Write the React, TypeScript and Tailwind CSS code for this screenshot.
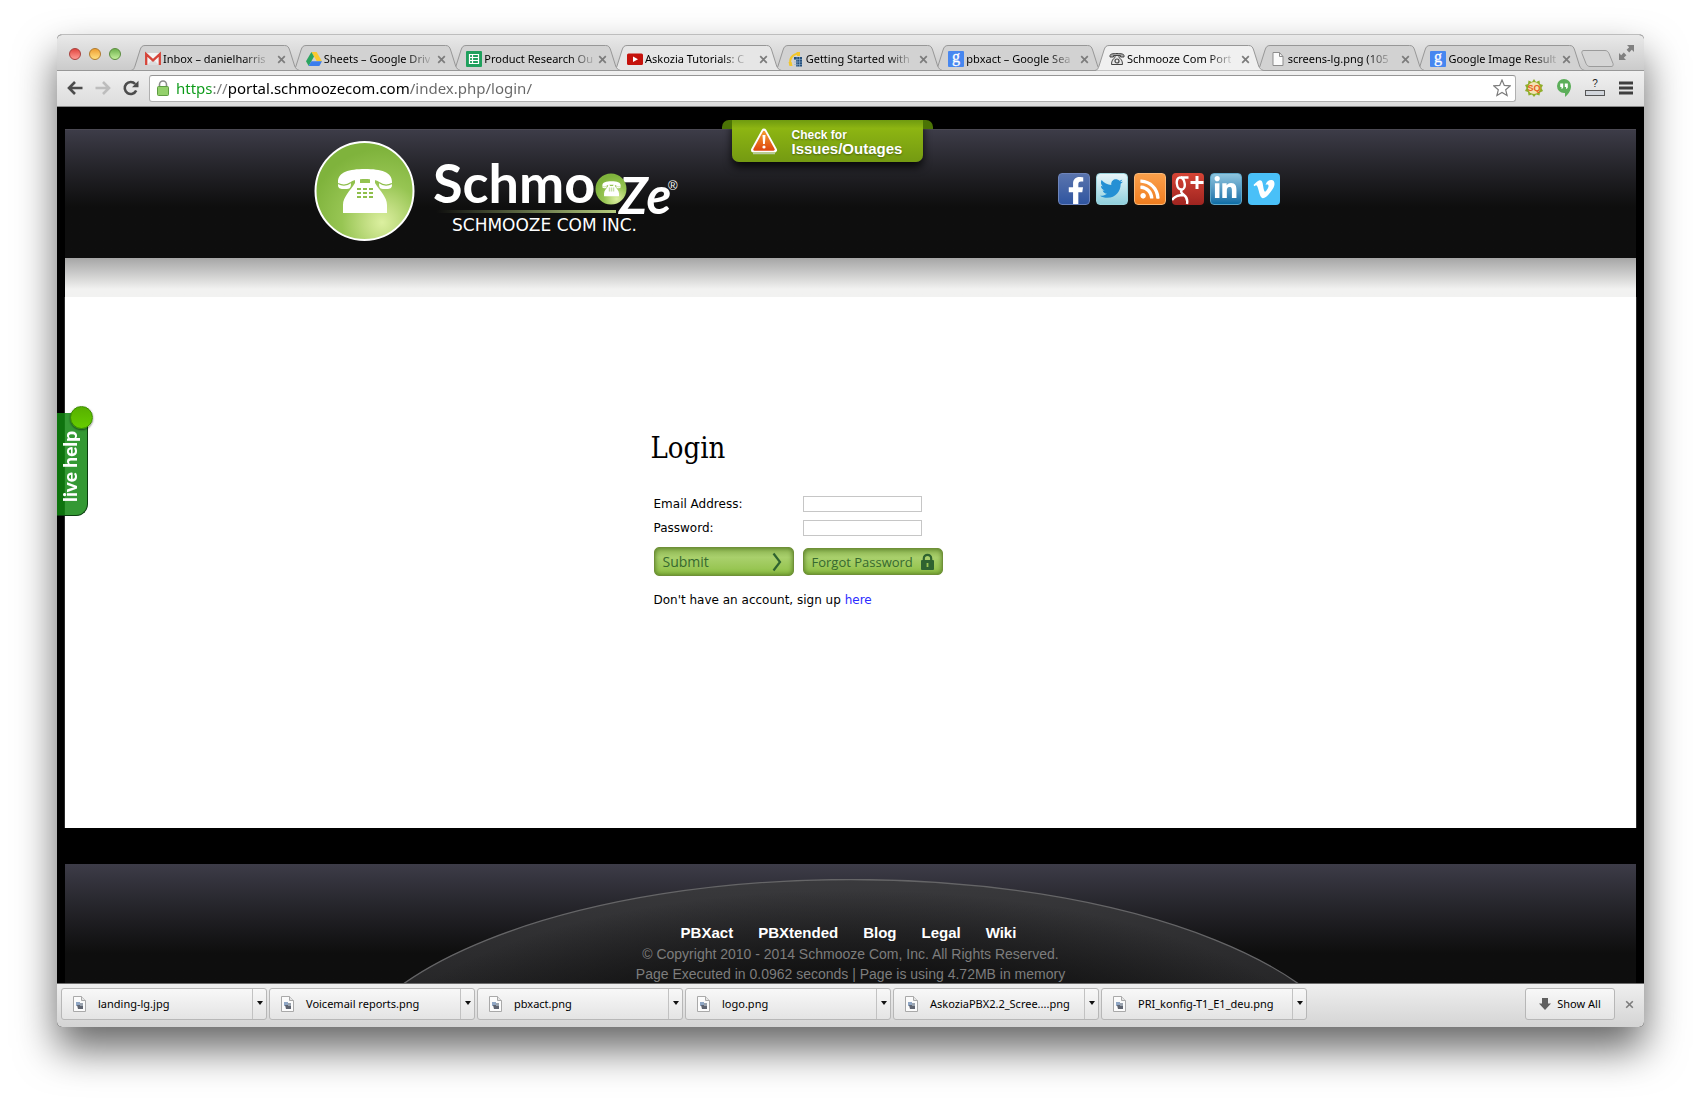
import { ReactNode, useState } from 'react'
import { FaFacebookF, FaLinkedinIn, FaRss, FaTwitter, FaVimeoV } from 'react-icons/fa'

interface Tab {
  title: string
  icon: ReactNode
  fill?: string
}

function GmailIcon() {
  return (
    <svg width="16" height="16" viewBox="0 0 16 16">
      <rect x="1" y="2" width="14" height="12" fill="#f3f3f3" />
      <path d="M2 14 8 8l6 6z" fill="#dcdcdc" />
      <path d="M1.2 14V3.2L8 9.4l6.800-6.200V14" fill="none" stroke="#d6453a" strokeWidth="2.300" />
    </svg>
  )
}

function DriveIcon() {
  return (
    <svg width="16" height="16" viewBox="0 0 16 16">
      <path d="M5.400 1h5.200L16 10.300h-5.200z" fill="#fbc92f" />
      <path d="M5.400 1 8 5.500 2.700 15 0 10.300z" fill="#2ba45f" />
      <path d="M5.300 10.300H16L13.400 15H2.700z" fill="#3b7ded" />
    </svg>
  )
}

function SheetsIcon() {
  return (
    <svg width="16" height="16" viewBox="0 0 16 16">
      <rect width="16" height="16" rx="1" fill="#1fa05d" />
      <path d="M3.500 3.500h9v9h-9zM3.500 6.500h9M3.500 9.500h9M6.500 3.500v9" fill="none" stroke="#fff" strokeWidth="1.200" />
    </svg>
  )
}

function YoutubeIcon() {
  return (
    <svg width="16" height="16" viewBox="0 0 16 16">
      <rect y="2.500" width="16" height="11.500" rx="1.500" fill="#c5120c" />
      <path d="M6 5.500v5.500l5-2.700z" fill="#fff" />
    </svg>
  )
}

function AskoziaIcon() {
  return (
    <svg width="16" height="16" viewBox="0 0 16 16">
      <path d="M2.500 14C1 8 4 3 11 2.500" fill="none" stroke="#f2c62c" strokeWidth="2" />
      <path d="M8.500 1h3.500v4H9zM.5 11h3l1 4h-3z" fill="#f2c62c" />
      <path d="M6 6h8v9.500H8V9H6z" fill="#244f7c" />
      <path d="M6 8.500h8M6 11h8M6 13.500h8M9 6v10M11.500 6v10" stroke="#8eb0cf" strokeWidth=".6" />
    </svg>
  )
}

function GoogleIcon() {
  return (
    <svg width="16" height="16" viewBox="0 0 16 16" className="overflow-visible">
      <rect width="16" height="16" rx="1" fill="#4787f0" />
      <text x="8" y="11" textAnchor="middle" fontSize="16" fill="#fff" stroke="#fff" strokeWidth=".3" fontFamily="Liberation Serif, serif">
        g
      </text>
    </svg>
  )
}

function FileIcon() {
  return (
    <svg width="16" height="16" viewBox="0 0 16 16">
      <path d="M3 1.500h6.500l3.500 4v9H3z" fill="#fafafa" stroke="#8d8d8d" />
      <path d="M9.500 1.500v4H13" fill="none" stroke="#8d8d8d" />
    </svg>
  )
}

function PhoneShape({ fill, holes }: { fill: string; holes: string }) {
  return (
    <>
      <path
        d="M1 14C1 4 12 1 28 1s27 3 27 13v3c0 3-2 4-5 4h-4c-4 0-4-3-4-7-3-4-25-4-28 0 0 4 0 7-4 7H6c-3 0-5-1-5-4z"
        fill={fill}
      />
      <path d="M18 11h5v4h10v-4h5v4c5 8 12 14 12 22v8H6v-8c0-8 7-14 12-22z" fill={fill} />
      <path d="M1 15.500c4 2 9 2 13-1M42 14.500c4 3 9 3 13 1" fill="none" stroke={holes} strokeWidth="1.200" />
      <path
        d="M20 20h4v2h-4zM26 20h4v2h-4zM32 20h4v2h-4zM20 24h4v2h-4zM26 24h4v2h-4zM32 24h4v2h-4zM20 28h4v2h-4zM26 28h4v2h-4zM32 28h4v2h-4z"
        fill={holes}
      />
    </>
  )
}

function PhoneIcon() {
  return (
    <svg width="16" height="16" viewBox="0 0 16 16">
      <path d="M1 6V4.500C1 3 4 2.500 8 2.500s7 .5 7 2V6h-3.500V4.500h-7V6z" fill="#aaa" stroke="#444" />
      <path d="M6 5v1.500C4 8 2.500 9.500 2.500 13.500h11C13.500 9.500 12 8 10 6.500V5" fill="#e8e8e8" stroke="#444" />
      <circle cx="8" cy="10" r="2" fill="none" stroke="#444" strokeWidth="1.200" />
    </svg>
  )
}

const tabs: Tab[] = [
  { title: 'Inbox – danielharris', icon: <GmailIcon /> },
  { title: 'Sheets – Google Driv', icon: <DriveIcon /> },
  { title: 'Product Research Ou', icon: <SheetsIcon /> },
  { title: 'Askozia Tutorials: C', icon: <YoutubeIcon />, fill: '#e6e6e6' },
  { title: 'Getting Started with', icon: <AskoziaIcon /> },
  { title: 'pbxact – Google Sea', icon: <GoogleIcon /> },
  { title: 'Schmooze Com Port', icon: <PhoneIcon />, fill: '#f0f0f0' },
  { title: 'screens-lg.png (105', icon: <FileIcon /> },
  { title: 'Google Image Result', icon: <GoogleIcon /> },
]

const downloads = [
  'landing-lg.jpg',
  'Voicemail reports.png',
  'pbxact.png',
  'logo.png',
  'AskoziaPBX2.2_Scree....png',
  'PRI_konfig-T1_E1_deu.png',
]

const footerLinks = ['PBXact', 'PBXtended', 'Blog', 'Legal', 'Wiki']

function TabStrip() {
  const [active, setActive] = useState(6)

  return (
    <div className="flex h-9 items-end border-b border-[#989898] bg-gradient-to-b from-[#e9e9e9] to-[#cbcbcb]">
      <div className="flex gap-2 self-start pl-3 pt-[13px]">
        <button aria-label="Close" className="size-3 rounded-full border border-[#a8403c] bg-gradient-to-b from-[#e0433f] to-[#ff9a94]" />
        <button aria-label="Minimize" className="size-3 rounded-full border border-[#b07a2c] bg-gradient-to-b from-[#ee9f2f] to-[#ffe07e]" />
        <button aria-label="Zoom" className="size-3 rounded-full border border-[#5a8c3d] bg-gradient-to-b from-[#6fb24e] to-[#c4f09c]" />
      </div>
      <div className="-mb-px ml-[10px] mr-1 flex min-w-0 flex-1">
        {tabs.map((tab, i) => (
          <div
            key={tab.title}
            className="relative -mr-2 flex h-[26px] min-w-0 flex-1 items-center px-[14px] pt-[2px]"
            style={{ zIndex: i === active ? 20 : tabs.length - i }}
          >
            <svg className="absolute inset-0 h-full w-full" viewBox="0 0 168 26" preserveAspectRatio="none">
              <path
                d="M0 25.500C3 25 3 23 4 21L9 5C10 2 11 .5 14 .5H153C156 .5 157 2 158 5L163 21C164 23 165 25 168 25.500"
                fill={tab.fill ?? '#d2d2d2'}
                stroke="#979797"
                vectorEffect="non-scaling-stroke"
              />
              {i !== active && <path d="M0 25.500H168" stroke="#979797" vectorEffect="non-scaling-stroke" />}
            </svg>
            <button
              onClick={() => setActive(i)}
              className="relative flex min-w-0 flex-1 items-center gap-[2px] text-[11px] leading-4 text-black"
            >
              <span className="shrink-0">{tab.icon}</span>
              <span className="whitespace-nowrap text-left [mask-image:linear-gradient(to_right,#000_78%,rgba(0,0,0,0.15))]">
                {tab.title}
              </span>
            </button>
            <button aria-label={`Close ${tab.title}`} className="relative ml-[5px]">
              <svg width="9" height="9" viewBox="0 0 9 9">
                <path d="m1.200 1.200 6.600 6.600M7.800 1.200 1.200 7.800" stroke="#7c7c7c" strokeWidth="1.700" />
              </svg>
            </button>
          </div>
        ))}
      </div>
      <button aria-label="New tab" className="mb-[3px]">
        <svg width="33" height="17" viewBox="0 0 33 17">
          <path d="M3 .5h21c2 0 3 1 4 3l4 10c.5 2 0 3-2 3H9c-2 0-3-1-4-3L1 3.500C.5 1.500 1 .5 3 .5z" fill="#d5d5d5" stroke="#9b9b9b" />
        </svg>
      </button>
      <button aria-label="Full screen" className="mb-[10px] ml-[5px] mr-[10px]">
        <svg width="15" height="15" viewBox="0 0 15 15" fill="#808080">
          <path d="M8 0h7v7l-2.200-2.200-2.600 2.600-2.600-2.600 2.600-2.600zM7 15H0V8l2.200 2.200 2.600-2.600 2.600 2.600-2.600 2.600z" />
        </svg>
      </button>
    </div>
  )
}

function Toolbar() {
  return (
    <div className="flex h-9 items-center border-b border-[#8a8a8a] bg-gradient-to-b from-[#f0f0f0] to-[#dcdcdc] pb-px pl-[10px] pr-[11px]">
      <button aria-label="Back">
        <svg width="16" height="14" viewBox="0 0 16 14" fill="none" stroke="#4c4c4c" strokeWidth="2.600">
          <path d="M15.500 7H2M8 1 2 7l6 6" />
        </svg>
      </button>
      <button aria-label="Forward" className="ml-3">
        <svg width="16" height="14" viewBox="0 0 16 14" fill="none" stroke="#bdbdbd" strokeWidth="2.600">
          <path d="M.5 7H14M8 1l6 6-6 6" />
        </svg>
      </button>
      <button aria-label="Reload" className="ml-3">
        <svg width="16" height="16" viewBox="0 0 16 16">
          <path d="M13.200 10.500A6 6 0 1 1 12.200 4" fill="none" stroke="#4c4c4c" strokeWidth="2.600" />
          <path d="M15.500.8v6.400H9z" fill="#4c4c4c" />
        </svg>
      </button>
      <div className="ml-[10px] flex h-[27px] flex-1 items-center rounded-[3px] border border-[#b0b0b0] border-t-[#959595] bg-white pl-[7px] pr-1">
        <svg width="12" height="16" viewBox="0 0 12 16">
          <path d="M2.500 8V4.500a3.500 3.500 0 0 1 7 0V8" fill="none" stroke="#8c8c8c" strokeWidth="1.600" />
          <rect x=".5" y="6.500" width="11" height="9" rx="1" fill="#93d06b" stroke="#5e9c42" />
        </svg>
        <input
          aria-label="Address"
          defaultValue="https://portal.schmoozecom.com/index.php/login/"
          className="ml-[7px] flex-1 bg-[linear-gradient(to_right,#0b9a17_0_36px,#777_36px_53px,#000_53px_233px,#666_233px)] bg-clip-text text-[15px] leading-6 text-transparent outline-none"
        />
        <button aria-label="Bookmark this page">
          <svg width="18" height="18" viewBox="0 0 18 18">
            <path d="m9 1 2.300 5.400 5.900.5-4.500 3.900 1.400 5.700L9 13.400l-5.100 3.100 1.400-5.700L.8 6.900l5.900-.5z" fill="#fff" stroke="#7d7d7d" strokeWidth="1.200" />
          </svg>
        </button>
      </div>
      <button aria-label="Search extension" className="ml-[9px]">
        <svg width="18" height="18" viewBox="0 0 18 18">
          <path d="m9 0 2 3 3.500-1.500.5 3.500 3 1-1.500 3L18 12l-3 1.500-.5 3-3.500-1L9 18l-2-2.500-3.500 1-.5-3.500L0 12l1.500-3L0 6l3-1 .5-3.500L7 3z" fill="#8fae2b" />
          <circle cx="9" cy="9" r="6" fill="#f3e2b4" />
          <text x="9" y="12" textAnchor="middle" fontSize="9" fontWeight="700" fill="#e5601c" fontFamily="Liberation Sans, sans-serif">
            SQ
          </text>
        </svg>
      </button>
      <button aria-label="Hangouts" className="ml-[14px]">
        <svg width="14" height="18" viewBox="0 0 14 18">
          <path d="M7 0a7 7 0 0 1 7 7c0 5-3 8.500-6 11v-4H7A7 7 0 0 1 7 0z" fill="#5cae5a" />
          <path d="M3.200 4.500h3V8c0 1-.7 1.700-1.700 2V8H3.200zM7.800 4.500h3V8c0 1-.7 1.700-1.700 2V8H7.800z" fill="#fff" />
        </svg>
      </button>
      <button aria-label="Unknown page rank" className="ml-[14px]">
        <svg width="20" height="18" viewBox="0 0 20 18" className="overflow-visible">
          <text x="10" y="8" textAnchor="middle" fontSize="10" fill="#222" fontFamily="Liberation Sans, sans-serif">
            ?
          </text>
          <rect x=".5" y="11.500" width="19" height="5" fill="#d2d6dc" stroke="#555" />
        </svg>
      </button>
      <button aria-label="Menu" className="ml-[14px]">
        <svg width="14" height="14" viewBox="0 0 14 14" stroke="#3e3e3e" strokeWidth="2.800">
          <path d="M0 2h14M0 7h14M0 12h14" />
        </svg>
      </button>
    </div>
  )
}

function Logo() {
  return (
    <svg width="366" height="104" viewBox="0 -1 366 104" role="img" aria-label="Schmooze Com Inc." className="shrink-0">
      <defs>
        <radialGradient id="ball" cx=".68" cy=".82" r=".75">
          <stop offset="0" stopColor="#dcf0a0" />
          <stop offset=".2" stopColor="#c5e086" />
          <stop offset=".55" stopColor="#97c553" />
          <stop offset="1" stopColor="#7fb33c" />
        </radialGradient>
        <linearGradient id="rule">
          <stop offset="0" stopColor="#b5cc7e" stopOpacity="0" />
          <stop offset="1" stopColor="#b5cc7e" />
        </linearGradient>
      </defs>
      <circle cx="50.500" cy="52" r="49" fill="url(#ball)" stroke="#fff" strokeWidth="2" />
      <g transform="translate(23 29)">
        <PhoneShape fill="#fff" holes="#8fbf4c" />
      </g>
      <g fill="#fff" fontFamily="Lato, sans-serif" fontWeight="700">
        <text x="119" y="64" fontSize="54">Schmo</text>
        <text x="305" y="75" fontSize="51" fontStyle="italic">Ze</text>
      </g>
      <text x="354" y="51" fontSize="13" fill="#fff" fontFamily="Liberation Sans, sans-serif">®</text>
      <circle cx="297" cy="50" r="15.500" fill="url(#ball)" />
      <g transform="translate(288 42) scale(.34)">
        <PhoneShape fill="#fff" holes="#8fbf4c" />
      </g>
      <rect x="122" y="71" width="180" height="3" fill="url(#rule)" />
      <text x="138" y="92" fontSize="17" fill="#fff" fontFamily="DejaVu Sans, sans-serif">SCHMOOZE COM INC.</text>
    </svg>
  )
}

function SocialLinks() {
  return (
    <ul className="flex gap-[6px] pb-[3px] text-white">
      <li>
        <a href="#facebook" aria-label="Facebook" className="flex size-8 items-end justify-center overflow-hidden rounded-[4px] border border-[#6d84bb] bg-gradient-to-b from-[#5a74ad] to-[#2f55a0] pl-1">
          <FaFacebookF size={27} />
        </a>
      </li>
      <li>
        <a href="#twitter" aria-label="Twitter" className="flex size-8 items-center justify-center rounded-[4px] border border-[#9bd3dc] bg-gradient-to-b from-[#e8f6fa] to-[#90cfdc] text-[#2590d4]">
          <FaTwitter size={23} />
        </a>
      </li>
      <li>
        <a href="#rss" aria-label="RSS" className="flex size-8 items-center justify-center rounded-[4px] border border-[#f9b877] bg-gradient-to-b from-[#fba04a] to-[#ef7d1e]">
          <FaRss size={22} />
        </a>
      </li>
      <li>
        <a href="#google-plus" aria-label="Google Plus" className="flex size-8 items-center justify-center overflow-hidden rounded-[4px] bg-gradient-to-b from-[#d64435] to-[#9f2420]">
          <svg width="32" height="32" viewBox="0 0 32 32">
            <path d="M16.500 4.500H9M8 4.500c5 0 7 12 1.500 12S3 4.500 8 4.500zM10 17c-2 2 0 3.500 2 5s4 4 3 9M12 22c-5 0-10 2-12 5" fill="none" stroke="#fff" strokeWidth="2.400" />
            <path d="M25 3v13M18.500 9.500h13" stroke="#fff" strokeWidth="3" />
          </svg>
        </a>
      </li>
      <li>
        <a href="#linkedin" aria-label="LinkedIn" className="flex size-8 items-center justify-center rounded-[4px] border border-[#5fa6c8] bg-gradient-to-b from-[#8ec5de] to-[#0a6ea6]">
          <FaLinkedinIn size={25} />
        </a>
      </li>
      <li>
        <a href="#vimeo" aria-label="Vimeo" className="flex size-8 items-center justify-center rounded-[4px] bg-[#49c0f8]">
          <FaVimeoV size={24} />
        </a>
      </li>
    </ul>
  )
}

function StatusRibbon() {
  return (
    <a
      href="#status"
      className="absolute -top-[10px] left-[calc(50%-119px)] flex h-[42px] w-[191px] items-center rounded-b-[7px] bg-gradient-to-b from-[#6f9a10] via-[#8db512] via-20% to-[#749a12] pl-[18px] font-['Liberation_Sans',sans-serif] font-bold text-white shadow-[0_5px_9px_rgba(0,0,0,0.8)]"
    >
      <span className="absolute -left-[10px] top-0 h-[9px] w-[10px] rounded-tl-[7px] bg-[#4b7305]" />
      <span className="absolute -right-[10px] top-0 h-[9px] w-[10px] rounded-tr-[7px] bg-[#4b7305]" />
      <svg width="28" height="28" viewBox="0 0 28 28">
        <defs>
          <linearGradient id="warn" x1="0" y1="0" x2="0" y2="1">
            <stop offset="0" stopColor="#f2992c" />
            <stop offset="1" stopColor="#df4a10" />
          </linearGradient>
        </defs>
        <path d="M14 4 24.500 23H3.500z" fill="#fff" stroke="#fff" strokeWidth="5" strokeLinejoin="round" />
        <path d="M14 5 23.500 22.500h-19z" fill="url(#warn)" stroke="url(#warn)" strokeWidth="2.500" strokeLinejoin="round" />
        <path d="M3 26.500h22" stroke="#b9c9a0" strokeWidth="1.500" />
        <path d="M12.500 8h3l-.6 9h-1.800z" fill="#fff" />
        <circle cx="14" cy="20" r="1.600" fill="#fff" />
      </svg>
      <span className="ml-[14px] flex flex-col pt-px [text-shadow:0_1px_2px_rgba(0,0,0,0.4)]">
        <span className="text-[12px] leading-[14px]">Check for</span>
        <span className="text-[15px] leading-[14px]">Issues/Outages</span>
      </span>
    </a>
  )
}

function LoginForm() {
  const glossy =
    "flex items-center justify-between whitespace-nowrap rounded-[5px] border border-[#6f9038] bg-gradient-to-b from-[#8fb653] via-[#a9d06c] via-35% to-[#8fc043] font-['Open_Sans',sans-serif] text-[#36692f] shadow-[inset_0_0_5px_#4f7420]"

  return (
    <form
      className="mx-auto w-full max-w-[400px] font-['DejaVu_Sans',sans-serif] text-[12px] leading-4 text-black"
      onSubmit={(e) => e.preventDefault()}
    >
      <h1 className="font-['DejaVu_Serif_Condensed','DejaVu_Serif',serif] text-[29px] leading-[40px]">Login</h1>
      <div className="mt-7 grid grid-cols-[140px_140px] items-center gap-x-[9px] gap-y-2 pl-[3px]">
        <label htmlFor="email">Email Address:</label>
        <input id="email" type="email" className="h-4 w-[119px] border border-[#c6c6c6] px-1 text-[11px] outline-none" />
        <label htmlFor="password">Password:</label>
        <input id="password" type="password" className="h-4 w-[119px] border border-[#c6c6c6] px-1 text-[11px] outline-none" />
        <button type="submit" className={`${glossy} mt-[3px] h-[29px] pl-2 pr-[11px] text-[14px]`}>
          Submit
          <svg width="10" height="20" viewBox="0 0 10 20">
            <path d="m1.500 1.500 6.500 8.500-6.500 8.500" fill="none" stroke="#2f6330" strokeWidth="2.200" />
          </svg>
        </button>
        <button type="button" className={`${glossy} mt-[3px] h-[27px] px-2 text-[13px]`}>
          Forgot Password
          <svg width="13" height="18" viewBox="0 0 13 18">
            <path d="M2.800 8V5.500a3.700 3.700 0 0 1 7.400 0V8" fill="none" stroke="#2f6330" strokeWidth="2.200" />
            <rect y="7" width="13" height="10" rx="1" fill="#2f6330" />
            <path d="M6.500 10v4" stroke="#9cc653" strokeWidth="1.800" />
          </svg>
        </button>
      </div>
      <p className="mt-4 pl-[3px]">
        Don't have an account, sign up{' '}
        <a href="#signup" className="text-[#2b2bff]">
          here
        </a>
      </p>
    </form>
  )
}

function SiteFooter() {
  return (
    <footer className="relative mx-2 mt-9 h-[119px] overflow-hidden bg-gradient-to-b from-[#3d3c48] to-[#0e0e0e] to-75% font-['Liberation_Sans',sans-serif]">
      <svg className="absolute left-1/2 top-[15px] -translate-x-1/2" width="1030" height="206" viewBox="0 0 1030 206">
        <defs>
          <linearGradient id="dome" x1="0" y1="0" x2="0" y2="1">
            <stop offset="0" stopColor="#3a3a3d" />
            <stop offset=".35" stopColor="#1f1f20" />
            <stop offset=".5" stopColor="#161616" />
          </linearGradient>
          <radialGradient id="domeShade">
            <stop offset=".6" stopColor="#0e0e0e" />
            <stop offset="1" stopColor="#0e0e0e" stopOpacity="0" />
          </radialGradient>
        </defs>
        <ellipse cx="515" cy="206.500" rx="514.500" ry="206" fill="url(#dome)" stroke="#656567" strokeWidth="1.300" />
        <ellipse cx="515" cy="206" rx="500" ry="195" fill="url(#domeShade)" opacity=".8" />
      </svg>
      <div className="relative flex flex-col items-center pt-[57px] text-[14px] leading-5 text-[#7d7d7d]">
        <nav className="flex gap-[25px] pr-1 text-[15px] font-bold leading-[23px] text-white">
          {footerLinks.map((link) => (
            <a key={link} href={`#${link}`}>
              {link}
            </a>
          ))}
        </nav>
        <p>© Copyright 2010 - 2014 Schmooze Com, Inc. All Rights Reserved.</p>
        <p>Page Executed in 0.0962 seconds | Page is using 4.72MB in memory</p>
      </div>
    </footer>
  )
}

function LiveHelp() {
  return (
    <button className="absolute left-0 top-[306px] flex h-[103px] w-[31px] items-center justify-center rounded-br-[12px] border-b border-r border-[#0b3d10] bg-[#118711]/85 pr-[5px] pt-1">
      <span className="rotate-180 whitespace-nowrap font-['Lato',sans-serif] text-[19px] font-black leading-5 text-white [writing-mode:vertical-rl]">
        live help
      </span>
      <span className="absolute -right-[6px] -top-[7px] size-[23px] rounded-full border border-[#3a8a00] bg-gradient-to-b from-[#57b000] to-[#66cc00] shadow-[0_1px_2px_rgba(0,0,0,0.5)]" />
    </button>
  )
}

function DownloadBar() {
  return (
    <div className="flex items-start gap-[2px] border-t border-[#6d6d6d] bg-gradient-to-b from-[#efefef] to-[#d4d4d4] pb-[7px] pl-1 pr-[10px] pt-1 text-[11px] text-black">
      {downloads.map((name) => (
        <div key={name} className="flex h-8 w-[206px] min-w-0 rounded-[3px] border border-[#b7b7b7] bg-gradient-to-b from-[#f8f8f8] to-[#e4e4e4]">
          <button className="flex min-w-0 flex-1 items-center gap-3 whitespace-nowrap pl-[11px]">
            <svg width="13" height="16" viewBox="0 0 13 16" className="shrink-0">
              <path d="M.5.5h8l4 4v11H.5z" fill="#fbfbfb" stroke="#a9a9a9" />
              <path d="M8.500.5v4h4" fill="#e4e4e4" stroke="#a9a9a9" />
              <path d="M3 6h4v4H3z" fill="#8fa6c4" />
              <path d="M4 9h6v4H5z" fill="#5f6470" />
              <path d="M7 7h3v3H7z" fill="#9aa3ae" />
            </svg>
            {name}
          </button>
          <button aria-label={`Options for ${name}`} className="flex w-[14px] items-start justify-center border-l border-[#c2c2c2] pt-3">
            <svg width="6" height="4" viewBox="0 0 6 4">
              <path d="M0 0h6L3 4z" fill="#111" />
            </svg>
          </button>
        </div>
      ))}
      <button className="ml-auto flex h-8 w-[90px] items-center justify-center gap-[6px] rounded-[3px] border border-[#b7b7b7] bg-gradient-to-b from-[#f8f8f8] to-[#e4e4e4]">
        <svg width="12" height="12" viewBox="0 0 12 12">
          <path d="M3 0h6v5.500h3L6 12 0 5.500h3z" fill="#606060" />
        </svg>
        Show All
      </button>
      <button aria-label="Close downloads" className="ml-2 pt-3">
        <svg width="9" height="9" viewBox="0 0 9 9">
          <path d="m1.200 1.200 6.600 6.600M7.800 1.200 1.200 7.800" stroke="#7c7c7c" strokeWidth="1.600" />
        </svg>
      </button>
    </div>
  )
}

export default function App() {
  return (
    <div className="flex min-h-screen flex-col overflow-hidden bg-white px-[57px] pb-[78px] pt-[34px] font-['Noto_Sans',sans-serif]">
      <div className="flex flex-1 flex-col overflow-hidden rounded-[5px] border-t border-[#bdbdbd] bg-black shadow-[0_22px_40px_rgba(0,0,0,0.6)]">
        <TabStrip />
        <Toolbar />
        <div className="relative flex flex-1 flex-col pt-[22px]">
          <header className="relative mx-2 border-t border-[#4a4852] bg-gradient-to-b from-[#3d3c48] to-[#0e0e0e] to-60%">
            <StatusRibbon />
            <div className="mx-auto flex h-[128px] max-w-[1074px] items-center justify-between pb-[8px] pr-[108px]">
              <Logo />
              <SocialLinks />
            </div>
          </header>
          <div className="mx-2 h-[39px] bg-gradient-to-b from-[#a6a6a6] to-[#f2f2f1] to-80%" />
          <main className="mx-[7px] flex-1 border-x border-[#2a2a2a] bg-white pt-[131px]">
            <LoginForm />
          </main>
          <SiteFooter />
          <LiveHelp />
        </div>
        <DownloadBar />
      </div>
    </div>
  )
}
